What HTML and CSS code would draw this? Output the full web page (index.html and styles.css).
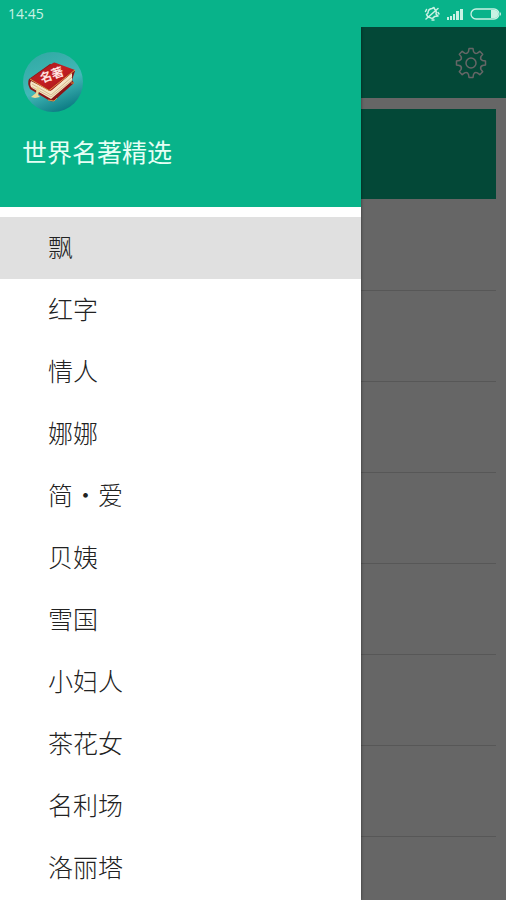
FILE: index.html
```html
<!DOCTYPE html>
<html lang="zh-CN">
<head>
<meta charset="utf-8">
<meta name="viewport" content="width=device-width, initial-scale=1">
<title>世界名著精选</title>
<link rel="stylesheet" href="styles.css">
</head>
<body>
<header class="status">
  <time>14:45</time>
  <div class="status-icons">
    <svg width="16" height="16" viewBox="0 0 16 16" fill="none" stroke="currentColor" stroke-width="1.5" stroke-linecap="round" stroke-linejoin="round">
      <path d="M2.500 8.500 4 7Q4 3 8 2.500L10 1.500 10.500 3Q13 4.500 12 8L14 10 10.500 10.500Q8.500 13.500 6 11.500L4 11ZM2 13 14 2.500M1.500 5.500 2.500 3.500M14 6.500 15 8M8 14H10"/>
    </svg>
    <svg width="18" height="14" viewBox="0 0 18 14" fill="currentColor">
      <path d="M1 10h2v3H1zM4 9h2v4H4zM7 7h2v6H7zM10 4h3v9h-3zM14 2h3v11h-3z"/>
    </svg>
    <svg width="32" height="14" viewBox="0 0 32 14">
      <rect x="1" y="2" width="28" height="10" rx="5" fill="none" stroke="currentColor" stroke-width="1.3"/>
      <path d="M21 3h4q3 0 3 3v2q0 3-3 3h-4zM30 5q2 2 0 4z" fill="currentColor"/>
    </svg>
  </div>
</header>
<div class="app">
  <main class="page">
    <div class="toolbar">
      <button class="settings" type="button" aria-label="设置">
        <svg width="32" height="32" viewBox="-16 -16 32 32" fill="none" stroke="currentColor" stroke-width="1.5" stroke-linejoin="round">
          <path d="M-2-14.5H2L2.5-11.5A3 3 0 0 0 6.4-9.9L8.8-11.7 11.7-8.8 9.9-6.4A3 3 0 0 0 11.5-2.5L14.5-2V2L11.5 2.5A3 3 0 0 0 9.9 6.4L11.7 8.8 8.8 11.7 6.4 9.9A3 3 0 0 0 2.5 11.5L2 14.5H-2L-2.5 11.5A3 3 0 0 0-6.4 9.9L-8.8 11.7-11.7 8.8-9.9 6.4A3 3 0 0 0-11.5 2.5L-14.5 2V-2L-11.5-2.5A3 3 0 0 0-9.9-6.4L-11.7-8.8-8.8-11.7-6.4-9.9A3 3 0 0 0-2.5-11.5Z"/>
          <circle r="5"/>
        </svg>
      </button>
    </div>
    <div class="content">
      <div class="banner"></div>
      <ul class="chapters">
        <li></li><li></li><li></li><li></li><li></li><li></li><li></li><li></li>
      </ul>
    </div>
  </main>
  <div class="scrim"></div>
  <aside class="drawer">
    <div class="brand">
      <svg class="logo" width="62" height="62" viewBox="0 0 62 62">
        <defs>
          <linearGradient id="disc" x1="0.3" y1="0" x2="0.7" y2="1">
            <stop offset="0" stop-color="#32aaa5"/>
            <stop offset="0.55" stop-color="#43b8b8"/>
            <stop offset="1" stop-color="#087780"/>
          </linearGradient>
          <linearGradient id="cover" x1="0" y1="0" x2="1" y2="1">
            <stop offset="0" stop-color="#a3171a"/>
            <stop offset="0.5" stop-color="#c41f22"/>
            <stop offset="1" stop-color="#9b1115"/>
          </linearGradient>
        </defs>
        <circle cx="31" cy="31" r="30" fill="url(#disc)"/>
        <path d="M7 28Q5 32 8 38L28 50Q31 51 33 49L52 32 50 29 53 20 28 13Z" fill="#8b1517"/>
        <path d="M9 30Q7 34 10 37L29 48 50 30 50 22 28 40Z" fill="#f5e6c5"/>
        <path d="M10 33 29 44 50 26M10 36 29 46 50 29" fill="none" stroke="#c9a877" stroke-width="0.7"/>
        <path d="M8 28 31 12Q32 11 34 12L53 19 30 39Q28 40 26 39Z" fill="url(#cover)"/>
        <path d="M8 28 27 39.5 53 19M26 49 32 50 35 47M49 32 52 32" fill="none" stroke="#d69547" stroke-width="1"/>
        <path d="M15 35 18 37 16 44 18 46 13 47 9 46 14 42Z" fill="#ebd999"/>
        <text class="logo-text" x="20" y="32" transform="rotate(-20 20 32)">名著</text>
      </svg>
      <h1>世界名著精选</h1>
    </div>
    <nav>
      <ul class="books">
        <li><a class="current" href="#" aria-current="page">飘</a></li>
        <li><a href="#">红字</a></li>
        <li><a href="#">情人</a></li>
        <li><a href="#">娜娜</a></li>
        <li><a href="#">简·爱</a></li>
        <li><a href="#">贝姨</a></li>
        <li><a href="#">雪国</a></li>
        <li><a href="#">小妇人</a></li>
        <li><a href="#">茶花女</a></li>
        <li><a href="#">名利场</a></li>
        <li><a href="#">洛丽塔</a></li>
      </ul>
    </nav>
  </aside>
</div>
</body>
</html>
```
FILE: styles.css
```css
:root {
  --green: #08b38a;
  --cjk: "Noto Sans CJK SC", sans-serif;
}

* {
  box-sizing: border-box;
}

body {
  margin: 0;
  height: 100vh;
  display: flex;
  flex-direction: column;
  overflow: hidden;
  background: #fff;
  font-family: var(--cjk);
}

ul {
  margin: 0;
  padding: 0;
  list-style: none;
}

.status {
  flex: none;
  display: flex;
  align-items: center;
  justify-content: space-between;
  height: 27px;
  padding: 0 4px 0 8px;
  background: var(--green);
  color: #c9f2e4;
  font: 14px/27px "Open Sans", sans-serif;
}

.status-icons {
  display: flex;
  align-items: center;
  gap: 6px;
}

.app {
  position: relative;
  flex: 1;
  min-height: 0;
  overflow: hidden;
}

.toolbar {
  display: flex;
  align-items: center;
  justify-content: flex-end;
  height: 71px;
  padding: 0 19px;
  background: var(--green);
}

.settings {
  display: flex;
  padding: 0;
  border: 0;
  background: none;
  color: #fff;
}

.content {
  padding: 11px 10px;
}

.banner {
  height: 90px;
  background: var(--green);
}

.chapters li {
  height: 91px;
  border-bottom: 1px solid #dadada;
}

.chapters li:first-child {
  height: 92px;
}

.scrim {
  position: absolute;
  inset: 0;
  background: rgba(0, 0, 0, 0.6);
}

.drawer {
  position: absolute;
  inset: 0 auto 0 0;
  width: 71.4%;
  overflow: hidden;
  background: #fff;
  box-shadow: 0 0 3px rgba(0, 0, 0, 0.5);
}

.brand {
  height: 180px;
  padding: 24px 22px;
  background: var(--green);
}

.logo {
  display: block;
}

.logo-text {
  font: 700 12px var(--cjk);
  fill: #ffe3e0;
}

h1 {
  margin: 18px 0 0;
  color: #e6fff5;
  font-size: 25px;
  font-weight: 400;
  line-height: 40px;
}

.books {
  padding-top: 10px;
}

.books a {
  display: block;
  height: 62px;
  padding-left: 48px;
  color: #222;
  font-size: 25px;
  font-weight: 300;
  line-height: 58px;
  text-decoration: none;
}

.books .current {
  background: #e0e0e0;
}
```
